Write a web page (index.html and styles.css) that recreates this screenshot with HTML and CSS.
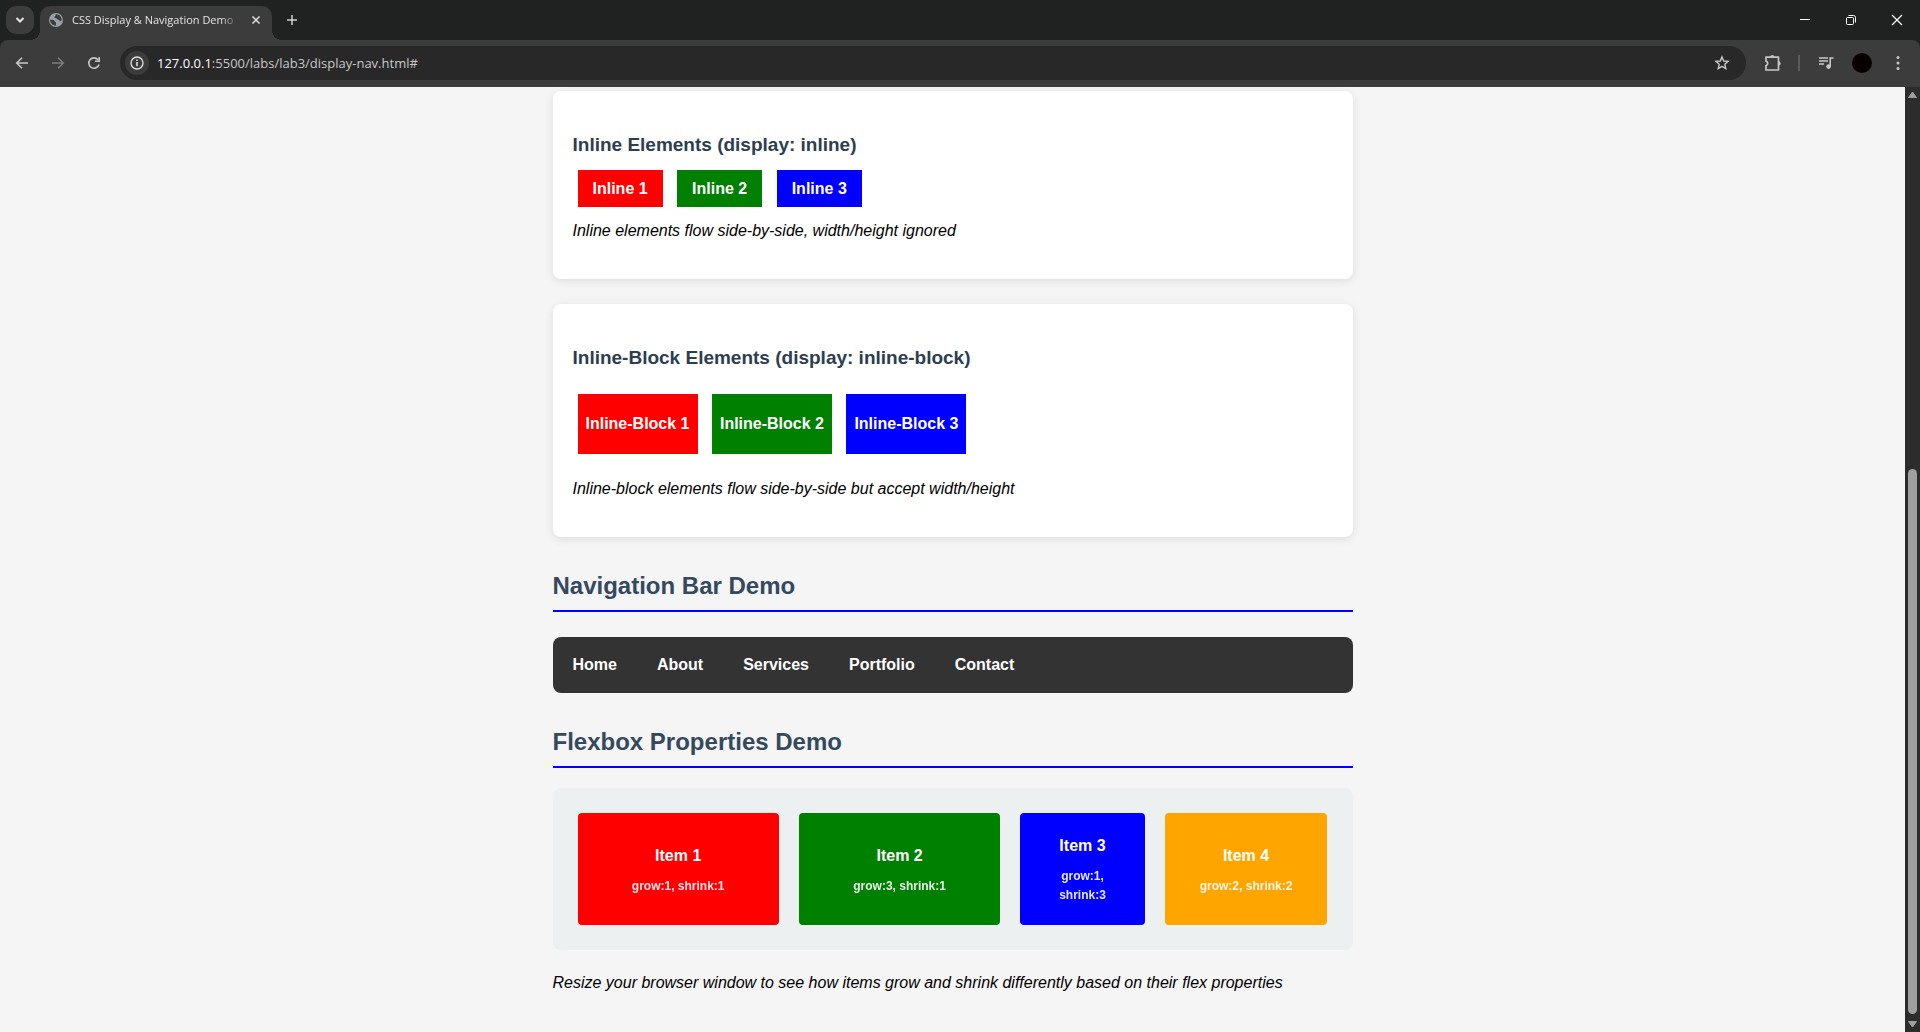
FILE: index.html
```html
<!DOCTYPE html>
<html lang="en">
<head>
<meta charset="utf-8">
<title>CSS Display &amp; Navigation Demo</title>
<link rel="stylesheet" href="styles.css">
</head>
<body>
<div class="browser">
  <header class="chrome">
    <div class="tab-strip">
      <button class="tab-search" aria-label="Search tabs"><svg width="10" height="10" viewBox="0 0 10 10"><path d="M1.5 3 5 6.5 8.500 3" fill="none" stroke="#e3e3e3" stroke-width="2"/></svg></button>
      <div class="tab">
        <svg class="favicon" width="16" height="16" viewBox="0 0 16 16"><circle cx="8" cy="8" r="7" fill="#9aa0a6"/><path d="M2 7.500c2 .2 4 .3 4.500 1.500.3 1 1.500.8 1.500 2v2.500c-3.500 0-6-2.500-6-6zM8 2.200c-1 .8-.3 1.800-1.300 2.300C6 5 6.300 6 7.500 6s1.300 1.500 2.500 1.500c1.500 0 1 1.500 2.500 1.500.8 0 1.200-.5 1.300-1.200C13.600 4.600 11.500 2.300 8 2.200z" fill="#3c3c3c"/></svg>
        <span class="tab-title">CSS Display &amp; Navigation Demo</span>
        <button class="tab-close" aria-label="Close tab"><svg width="10" height="10" viewBox="0 0 10 10"><path d="M1.500 1.500l7 7M8.500 1.500l-7 7" stroke="#e3e3e3" stroke-width="1.500"/></svg></button>
      </div>
      <button class="new-tab" aria-label="New tab"><svg width="12" height="12" viewBox="0 0 12 12"><path d="M6 1v10M1 6h10" stroke="#d0d0d0" stroke-width="1.500"/></svg></button>
      <div class="window-controls">
        <button aria-label="Minimize"><svg width="12" height="12" viewBox="0 0 12 12"><path d="M1 5.500h10" stroke="#fff"/></svg></button>
        <button aria-label="Restore"><svg width="12" height="12" viewBox="0 0 12 12"><rect x="1.500" y="3.500" width="7" height="7" rx="1" fill="none" stroke="#fff"/><path d="M3.500 1.500h5a2 2 0 0 1 2 2v5" fill="none" stroke="#fff"/></svg></button>
        <button aria-label="Close"><svg width="12" height="12" viewBox="0 0 12 12"><path d="M1 1l10 10M11 1L1 11" stroke="#fff" stroke-width="1.200"/></svg></button>
      </div>
    </div>
    <div class="toolbar">
      <button class="tool" aria-label="Back"><svg width="16" height="16" viewBox="0 0 16 16"><path d="M14 8H3M8 2.700 2.700 8 8 13.300" fill="none" stroke="#c7c7c7" stroke-width="1.600"/></svg></button>
      <button class="tool" aria-label="Forward"><svg width="16" height="16" viewBox="0 0 16 16"><path d="M2 8h11M8 2.700 13.300 8 8 13.300" fill="none" stroke="#7c7c7c" stroke-width="1.600"/></svg></button>
      <button class="tool" aria-label="Reload"><svg width="16" height="16" viewBox="0 0 16 16"><path d="M13 9.500A5.200 5.200 0 1 1 12 4.700M13.200 2v4.200H9" fill="none" stroke="#c7c7c7" stroke-width="1.600"/></svg></button>
      <div class="address-bar">
        <button class="site-info" aria-label="Site information"><svg width="16" height="16" viewBox="0 0 16 16"><circle cx="8" cy="8" r="6" fill="none" stroke="#e3e3e3" stroke-width="1.300"/><path d="M8 7v4.300M8 4.500V6" stroke="#e3e3e3" stroke-width="1.500"/></svg></button>
        <span class="url" role="textbox" aria-label="Address"><span class="host">127.0.0.1</span>:5500/labs/lab3/display-nav.html#</span>
        <button class="tool star" aria-label="Bookmark"><svg width="16" height="16" viewBox="0 0 16 16"><path d="M8 1.900l1.700 4.100 4.400.4-3.300 2.900 1 4.300L8 11.300l-3.800 2.300 1-4.300L1.900 6.400l4.400-.4z" fill="none" stroke="#c7c7c7" stroke-width="1.400"/></svg></button>
      </div>
      <div class="actions">
        <button class="tool" aria-label="Extensions"><svg width="18" height="18" viewBox="0 0 18 18"><path d="M3 3.200h12.500v12.800H3v-4.500a2.200 2.200 0 0 0 0-4.300z" fill="none" stroke="#c7c7c7" stroke-width="1.700" stroke-linejoin="round"/><path d="M7.300 3a2 2 0 0 1 4 0zM15.700 7.500a2 2 0 0 1 0 4z" fill="#c7c7c7"/></svg></button>
        <span class="divider"></span>
        <button class="tool" aria-label="Media controls"><svg width="16" height="16" viewBox="0 0 16 16"><path d="M1 3h9M1 6h9M1 9h5" stroke="#c7c7c7" stroke-width="1.500"/><path d="M12.200 11.500V3H15.500" fill="none" stroke="#c7c7c7" stroke-width="1.600"/><circle cx="10.600" cy="11.600" r="2.300" fill="#c7c7c7"/></svg></button>
        <button class="tool" aria-label="Profile"><span class="avatar"></span></button>
        <button class="tool menu" aria-label="Menu"><svg width="4" height="16" viewBox="0 0 4 16"><circle cx="2" cy="2.500" r="1.500" fill="#c7c7c7"/><circle cx="2" cy="8" r="1.500" fill="#c7c7c7"/><circle cx="2" cy="13.500" r="1.500" fill="#c7c7c7"/></svg></button>
      </div>
    </div>
  </header>
  <div class="viewport">
    <main class="page">
      <div class="container">
        <section class="demo-box">
          <h3>Inline Elements (display: inline)</h3>
          <span class="inline red">Inline 1</span>
          <span class="inline green">Inline 2</span>
          <span class="inline blue">Inline 3</span>
          <p>Inline elements flow side-by-side, width/height ignored</p>
        </section>
        <section class="demo-box">
          <h3>Inline-Block Elements (display: inline-block)</h3>
          <div class="inline-block red">Inline-Block 1</div>
          <div class="inline-block green">Inline-Block 2</div>
          <div class="inline-block blue">Inline-Block 3</div>
          <p>Inline-block elements flow side-by-side but accept width/height</p>
        </section>
        <h2>Navigation Bar Demo</h2>
        <nav class="navbar">
          <a href="#">Home</a>
          <a href="#">About</a>
          <a href="#">Services</a>
          <a href="#">Portfolio</a>
          <a href="#">Contact</a>
        </nav>
        <h2>Flexbox Properties Demo</h2>
        <div class="flex-container">
          <div class="flex-item item-1 red">Item 1<small>grow:1, shrink:1</small></div>
          <div class="flex-item item-2 green">Item 2<small>grow:3, shrink:1</small></div>
          <div class="flex-item item-3 blue">Item 3<small>grow:1, shrink:3</small></div>
          <div class="flex-item item-4 orange">Item 4<small>grow:2, shrink:2</small></div>
        </div>
        <p class="note">Resize your browser window to see how items grow and shrink differently based on their flex properties</p>
      </div>
    </main>
    <div class="scrollbar">
      <svg width="9" height="8" viewBox="0 0 9 8"><path d="M4.500 1 8.500 6.500h-8z" fill="#9f9f9f" stroke="#9f9f9f" stroke-linejoin="round"/></svg>
      <div class="track"><div class="thumb"></div></div>
      <svg width="9" height="8" viewBox="0 0 9 8"><path d="M4.500 7 8.500 1.500h-8z" fill="#9f9f9f" stroke="#9f9f9f" stroke-linejoin="round"/></svg>
    </div>
  </div>
</div>
</body>
</html>
```
FILE: styles.css
```css
body {
  margin: 0;
  font: 16px/26px "Liberation Sans", Arial, sans-serif;
  color: #000;
}

button {
  display: flex;
  align-items: center;
  justify-content: center;
  padding: 0;
  border: 0;
  background: none;
}

.browser {
  display: flex;
  flex-direction: column;
  height: 100vh;
  background: #202221;
}

.chrome {
  font-family: "Open Sans", "Noto Sans", sans-serif;
}

.tab-strip {
  display: flex;
  align-items: center;
  height: 40px;
  padding-left: 6px;
}

.tab-search {
  width: 28px;
  height: 28px;
  border-radius: 10px;
  background: #3c3c3c;
}

.tab {
  position: relative;
  display: flex;
  align-items: center;
  align-self: flex-end;
  box-sizing: border-box;
  width: 232px;
  height: 34px;
  margin-left: 6px;
  padding: 0 8px 6px;
  border-radius: 10px 10px 0 0;
  background: #3c3c3c;
}

.tab::before,
.tab::after {
  content: "";
  position: absolute;
  bottom: 0;
  width: 10px;
  height: 10px;
}

.tab::before {
  right: 100%;
  background: radial-gradient(circle at 0 0, transparent 10px, #3c3c3c 10px);
}

.tab::after {
  left: 100%;
  background: radial-gradient(circle at 100% 0, transparent 10px, #3c3c3c 10px);
}

.tab-title {
  flex: 1;
  margin-left: 8px;
  overflow: hidden;
  white-space: nowrap;
  font-size: 11px;
  line-height: 20px;
  color: #e3e3e3;
  -webkit-mask-image: linear-gradient(to left, transparent, #000 20px);
  mask-image: linear-gradient(to left, transparent, #000 20px);
}

.tab-close {
  width: 16px;
  height: 16px;
  margin-left: 8px;
}

.new-tab {
  width: 28px;
  height: 28px;
  margin-left: 6px;
}

.window-controls {
  display: flex;
  margin-left: auto;
}

.window-controls button {
  width: 46px;
  height: 40px;
}

.toolbar {
  display: flex;
  align-items: center;
  box-sizing: border-box;
  height: 47px;
  padding: 0 4px 1px;
  border-radius: 8px 8px 0 0;
  background: #3c3c3c;
}

.tool {
  width: 36px;
  height: 32px;
}

.address-bar {
  display: flex;
  flex: 1;
  align-items: center;
  height: 34px;
  margin-left: 8px;
  padding: 0 6px 0 5px;
  border-radius: 17px;
  background: #282828;
}

.site-info {
  width: 24px;
  height: 24px;
  border-radius: 12px;
  background: #3c3c3c;
}

.url {
  flex: 1;
  margin-left: 8px;
  font-size: 13px;
  line-height: 20px;
  color: #c7c7c7;
}

.host {
  color: #fff;
}

.actions {
  display: flex;
  align-items: center;
  margin-left: 8px;
}

.divider {
  width: 2px;
  height: 16px;
  margin: 0 8px;
  background: #5c5c5c;
}

.avatar {
  width: 20px;
  height: 20px;
  border-radius: 50%;
  background: #080000;
}

.viewport {
  display: flex;
  flex: 1;
  min-height: 0;
}

.page {
  flex: 1;
  overflow: hidden;
  padding-top: 4px;
  background: #f5f5f5;
}

.container {
  max-width: 800px;
  margin: 0 auto;
}

.demo-box {
  margin-bottom: 25px;
  padding: 20px;
  border-radius: 8px;
  background: #fff;
  box-shadow: 0 2px 10px rgba(0, 0, 0, 0.1);
}

h2 {
  margin: 30px 0 20px;
  padding-bottom: 5px;
  border-bottom: 2px solid #00f;
  font-size: 24px;
  line-height: 38px;
  color: #34495e;
}

h3 {
  margin: 19px 0 16px;
  font-size: 19px;
  line-height: 30px;
  color: #2c3e50;
}

p {
  margin: 16px 0 15px;
  font-style: italic;
}

.red { background: red; }
.green { background: green; }
.blue { background: blue; }
.orange { background: orange; }

.inline {
  margin: 0 5px;
  padding: 10px 15px;
  font-weight: bold;
  color: #fff;
}

.inline-block {
  display: inline-block;
  width: 120px;
  margin: 5px 5px 6px;
  line-height: 60px;
  text-align: center;
  font-weight: bold;
  color: #fff;
}

.navbar {
  display: flex;
  flex-wrap: wrap;
  gap: 40px;
  margin: 25px 0;
  padding: 15px 20px;
  border-radius: 8px;
  background: #333;
}

.navbar a {
  font-weight: bold;
  color: #fff;
  text-decoration: none;
}

.flex-container {
  display: flex;
  gap: 20px;
  padding: 25px;
  border-radius: 8px;
  background: #ecf0f1;
}

.flex-item {
  display: flex;
  flex-direction: column;
  justify-content: center;
  padding: 20px;
  border-radius: 4px;
  text-align: center;
  font-weight: bold;
  color: #fff;
}

.item-1 { flex: 1 1 200px; }
.item-2 { flex: 3 1 200px; }
.item-3 { flex: 1 3 200px; }
.item-4 { flex: 2 2 200px; }

.flex-item small {
  margin-top: 8px;
  font-size: 12px;
  line-height: 19px;
  opacity: 0.9;
}

.note {
  margin: 20px 0;
}

.scrollbar {
  display: flex;
  flex-direction: column;
  align-items: center;
  justify-content: space-between;
  width: 15px;
  padding: 4px 0;
  box-sizing: border-box;
  background: #2c2c2c;
}

.track {
  display: flex;
  flex: 1;
  align-items: flex-end;
  margin: 6px 0;
}

.thumb {
  width: 9px;
  height: 60%;
  border-radius: 5px;
  background: #9f9f9f;
}
```
